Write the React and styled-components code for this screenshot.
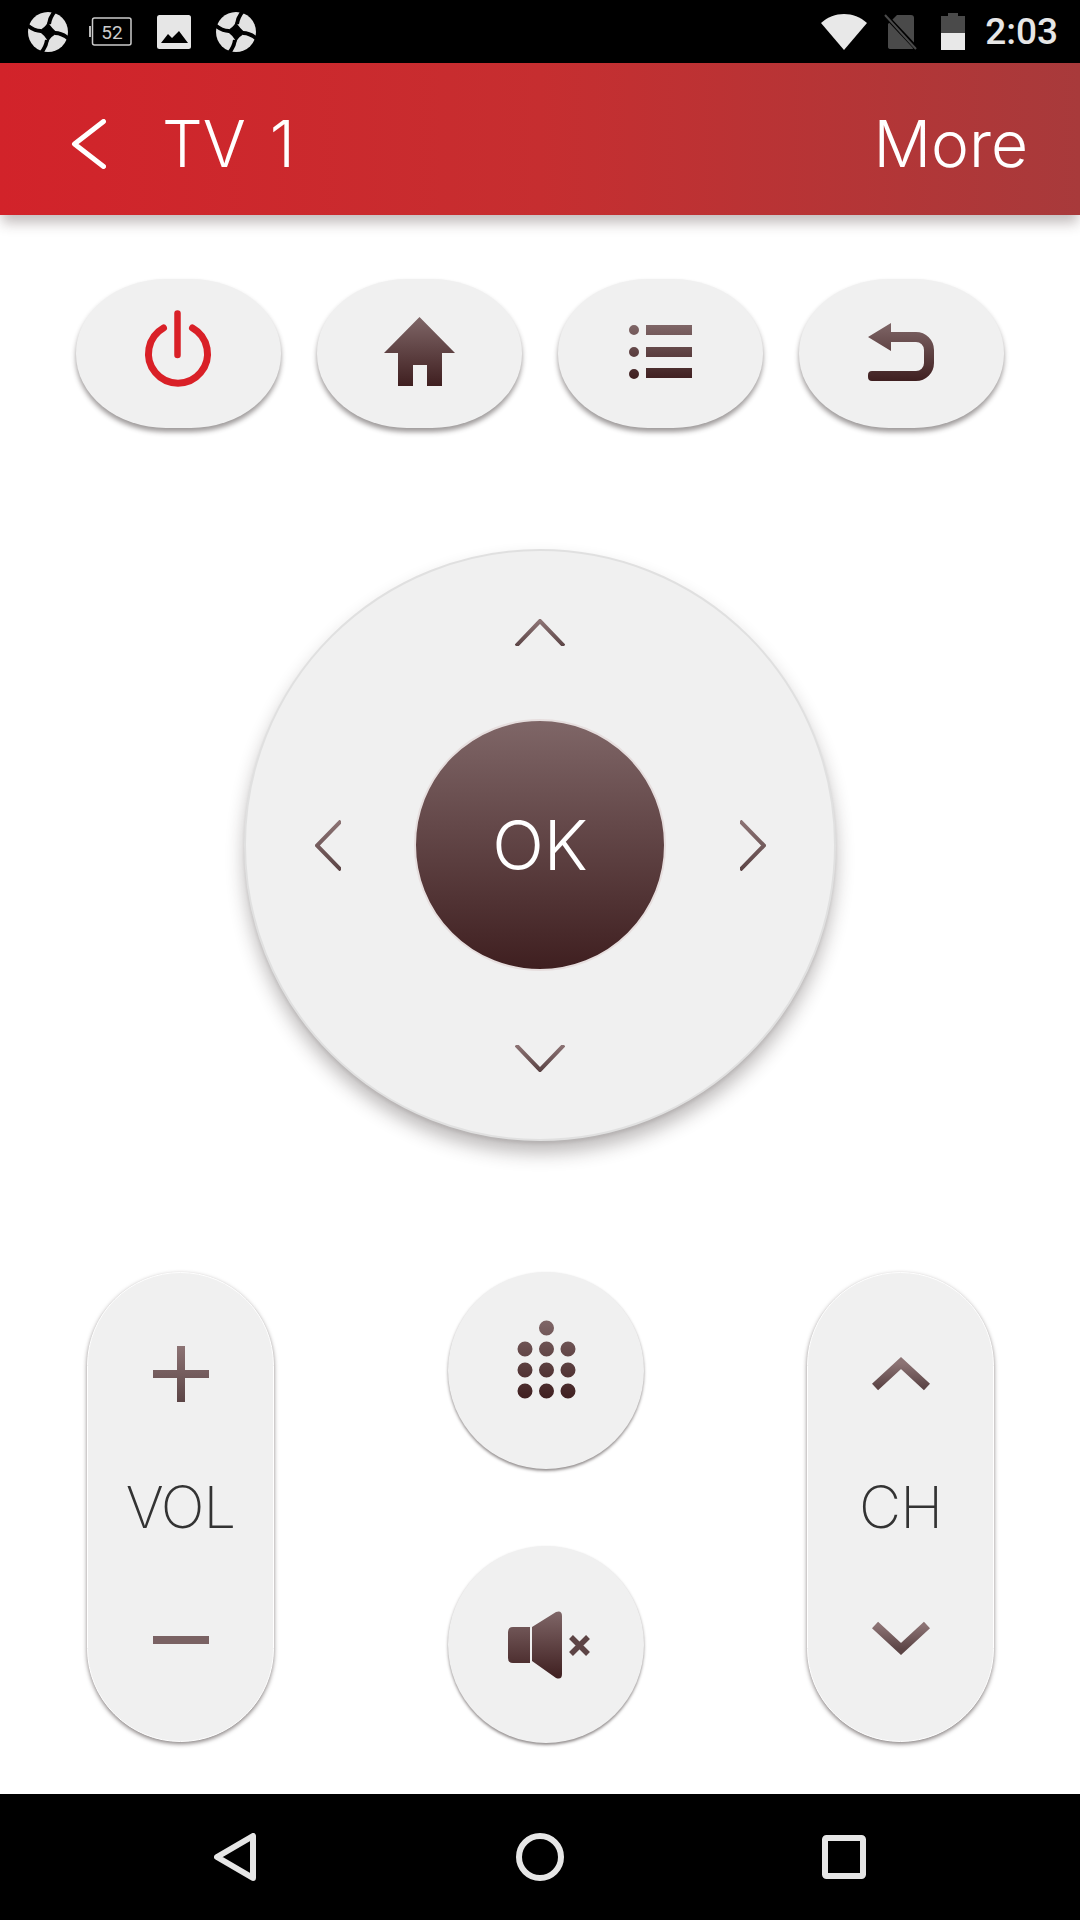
import React from "react"
import styled, { createGlobalStyle } from "styled-components"

const GlobalStyle = createGlobalStyle`
  html, body { margin: 0; padding: 0; background: #fff; }
  * { box-sizing: border-box; }
`

const Screen = styled.div`
  width: 1080px;
  height: 1920px;
  display: flex;
  flex-direction: column;
  overflow: hidden;
  background: #fff;
  font-family: Inter, "Liberation Sans", sans-serif;
`

const StatusBar = styled.div`
  height: 63px;
  background: #000;
  display: flex;
  align-items: center;
  padding: 0 22px 0 28px;
  color: #e6e6e6;
`

const StatusLeft = styled.div`
  display: flex;
  align-items: center;
  gap: 25px;
  flex: 1;
`

const StatusRight = styled.div`
  display: flex;
  align-items: center;
  gap: 20px;
`

const Time = styled.span`
  font-family: Roboto, sans-serif;
  font-weight: 500;
  font-size: 37px;
  line-height: 63px;
`

const AppBar = styled.div`
  height: 152px;
  display: flex;
  align-items: center;
  padding: 0 52px 0 71px;
  color: #fff;
  background: linear-gradient(90deg, #d2232a 0%, #c62e30 50%, #a83a3b 100%);
  box-shadow: 0 10px 12px -2px rgba(60, 40, 40, 0.3);
  position: relative;
`

const BarTitle = styled.span`
  font-weight: 300;
  font-size: 64px;
  line-height: 1;
  margin: 10px 0 0 56px;
  word-spacing: 6px;
  flex: 1;
`

const BarAction = styled.span`
  font-weight: 300;
  font-size: 64px;
  line-height: 1;
  margin-top: 10px;
`

const Main = styled.div`
  flex: 1;
  display: flex;
  flex-direction: column;
`

const ButtonRow = styled.div`
  display: flex;
  gap: 36.5px;
  padding: 64px 0 0 76px;
`

const Soft = styled.button`
  border: 0;
  background: #f0f0f0;
  display: flex;
  align-items: center;
  justify-content: center;
`

const TopButton = styled(Soft)`
  width: 204.5px;
  height: 149px;
  padding: 0 0 ${(p) => p.$lift || 4}px;
  border-radius: 90px / 74px;
  box-shadow: 0 4px 5px rgba(40, 30, 30, 0.45);
`

const DPad = styled.div`
  width: 592px;
  height: 592px;
  margin: 121px auto 0;
  border-radius: 50%;
  background: #f0f0f0;
  border: 2px solid #e0e0e0;
  box-shadow: 0 3px 3px rgba(40, 30, 30, 0.08), 0 12px 18px rgba(40, 30, 30, 0.3);
  display: grid;
  grid-template-columns: 1fr 252px 1fr;
  grid-template-rows: 1fr 252px 1fr;
  place-items: center;
`

const OkButton = styled.button`
  grid-column: 2;
  grid-row: 2;
  width: 252px;
  height: 252px;
  padding: 0;
  border-radius: 50%;
  border: 2px solid #e6dede;
  background: linear-gradient(180deg, #7f6667 0%, #3f1f20 100%);
  color: #fff;
  font-family: inherit;
  font-weight: 300;
  font-size: 68px;
`

const ArrowCell = styled.div`
  grid-column: ${(p) => p.$col};
  grid-row: ${(p) => p.$row};
  display: flex;
  margin: ${(p) => p.$margin};
`

const Lower = styled.div`
  display: flex;
  gap: 163px;
  margin-top: 131px;
  padding-left: 87px;
`

const Pill = styled.div`
  width: 187px;
  height: 470px;
  border-radius: 94px;
  background: #f0f0f0;
  border: 1px solid #fff;
  box-shadow: 0 2px 4px rgba(40, 30, 30, 0.55);
  padding: 73px 0;
  display: flex;
  flex-direction: column;
  align-items: center;
  justify-content: space-between;
`

const PillLabel = styled.span`
  font-weight: 200;
  font-size: 58px;
  letter-spacing: -1px;
  line-height: 1;
  color: #333;
`

const MiddleColumn = styled.div`
  margin-left: 11px;
  display: flex;
  flex-direction: column;
  gap: 77px;
`

const RoundButton = styled(Soft)`
  width: 196px;
  height: 197px;
  padding: ${(p) => p.$pad || 0};
  border-radius: 50%;
  box-shadow: 0 2px 3px rgba(40, 30, 30, 0.5);
`

const NavBar = styled.div`
  margin-top: auto;
  height: 126px;
  background: #000;
  display: flex;
  align-items: center;
  justify-content: space-between;
  padding: 0 214px;
`

const Icon = styled.svg`
  display: block;
  flex: none;
`

const BadgeSvg = styled(Icon)`
  margin-left: -4px;
`

const SimSvg = styled(Icon)`
  margin: 0 3px 0 -3px;
`

const NavHomeSvg = styled(Icon)`
  margin-left: 1px;
`

const BarChevronSvg = styled(Icon)`
  margin-top: 10px;
`

// shared brown fade used on the remote icons
const Fade = ({ id, light }) => (
  <defs>
    <linearGradient id={id} x1="0" y1="0" x2="0" y2="1">
      <stop offset="0" stopColor={light ? "#8c7374" : "#7f6667"} />
      <stop offset="1" stopColor={light ? "#5c4546" : "#3f1f20"} />
    </linearGradient>
  </defs>
)

const SyncIcon = () => (
  <Icon width="40" height="40" viewBox="0 0 40 40">
    <circle cx="20" cy="20" r="20" fill="#e2e2e2" />
    <path d="M20 10Q24 17 30 21Q23 24 20 30Q17 23 10 19Q17 16 20 10Z" fill="#000" />
    <path d="M-1 13Q6 19 13 19M27 -1Q22 5 21 12M41 27Q34 21 27 21M13 41Q18 35 19 28" fill="none" stroke="#000" strokeWidth="4" />
  </Icon>
)

const BatteryBadge = () => (
  <BadgeSvg width="43" height="29" viewBox="0 0 43 29">
    <rect x="0" y="9" width="2" height="11" fill="#bbb" />
    <rect x="3.5" y="1" width="38.5" height="27" rx="2" fill="none" stroke="#ccc" strokeWidth="1.5" />
    <text x="23" y="22" textAnchor="middle" fontFamily="Roboto, sans-serif" fontSize="19" fill="#ccc">52</text>
  </BadgeSvg>
)

const ImageIcon = () => (
  <Icon width="34" height="34" viewBox="0 0 34 34">
    <rect width="34" height="34" rx="2.5" fill="#e6e6e6" />
    <path d="M4 28L11 19L15 23L22 16L31 28Z" fill="#000" />
  </Icon>
)

const WifiIcon = () => (
  <Icon width="46" height="36" viewBox="0 0 46 36">
    <path d="M0 9C13 -3 33 -3 46 9L23 36Z" fill="#e8e8e8" />
  </Icon>
)

const SimIcon = () => (
  <SimSvg width="34" height="36" viewBox="0 0 34 36">
    <path d="M13 1H27Q30 1 30 4V33Q30 35 27 35H7Q4 35 4 33V10Z" fill="#4a4a4a" />
    <path d="M1 1L33 35" stroke="#000" strokeWidth="4.5" />
    <path d="M1 1L32 35" stroke="#4a4a4a" strokeWidth="2" />
  </SimSvg>
)

const BatteryIcon = () => (
  <Icon width="24" height="37" viewBox="0 0 24 37">
    <path d="M7 0H17V3H24V20H0V3H7Z" fill="#4a4a4a" />
    <rect y="20" width="24" height="17" fill="#e8e8e8" />
  </Icon>
)

const BarChevron = () => (
  <BarChevronSvg width="35" height="50" viewBox="0 0 35 50">
    <path d="M32.5 2.5L3.5 25L32.5 47.5" fill="none" stroke="#fff" strokeWidth="5" strokeLinecap="round" strokeLinejoin="round" />
  </BarChevronSvg>
)

const PowerIcon = () => (
  <Icon width="72" height="80" viewBox="0 0 72 80">
    <path d="M21.5 18A29.5 29.5 0 1 0 50.5 18" fill="none" stroke="#d92027" strokeWidth="7" strokeLinecap="round" />
    <path d="M35.5 3.5V45" fill="none" stroke="#d92027" strokeWidth="6.5" strokeLinecap="round" />
  </Icon>
)

const HomeIcon = () => (
  <Icon width="71" height="69" viewBox="0 0 71 69">
    <Fade id="home" />
    <path d="M35.5 0L71 36H58V69H43V48H29V69H14V36H0Z" fill="url(#home)" />
  </Icon>
)

const MenuIcon = () => (
  <Icon width="63" height="54" viewBox="0 0 63 54">
    <Fade id="menu" />
    <path d="M5 0A5 5 0 0 1 5 10A5 5 0 0 1 5 0ZM5 22A5 5 0 0 1 5 32A5 5 0 0 1 5 22ZM5 44A5 5 0 0 1 5 54A5 5 0 0 1 5 44ZM17 0H63V10H17ZM17 22H63V32H17ZM17 43H63V53H17Z" fill="url(#menu)" />
  </Icon>
)

const BackIcon = () => (
  <Icon width="66" height="58" viewBox="0 0 66 58">
    <Fade id="backArrow" />
    <path d="M0 14L23 0V9H48A18 18 0 0 1 66 27V40A18 18 0 0 1 48 58H4A4 4 0 0 1 0 54V52A4 4 0 0 1 4 48H48A8 8 0 0 0 56 40V27A8 8 0 0 0 48 19H23V28Z" fill="url(#backArrow)" />
  </Icon>
)

const DPadChevron = ({ dir }) => {
  const id = `pad-${dir}`
  const shapes = {
    up: { w: 50, h: 27, d: "M1 27L25 2L49 27" },
    down: { w: 50, h: 27, d: "M1 0L25 25L49 0" },
    left: { w: 26, h: 51, d: "M26 1L2 25.5L26 50" },
    right: { w: 26, h: 51, d: "M0 1L24 25.5L0 50" },
  }
  const s = shapes[dir]
  return (
    <Icon width={s.w} height={s.h} viewBox={`0 0 ${s.w} ${s.h}`}>
      <Fade id={id} light />
      <path d={s.d} fill="none" stroke={`url(#${id})`} strokeWidth="4" />
    </Icon>
  )
}

const PlusIcon = () => (
  <Icon width="56" height="56" viewBox="0 0 56 56">
    <Fade id="plus" light />
    <path d="M24 0H32V24H56V32H32V56H24V32H0V24H24Z" fill="url(#plus)" />
  </Icon>
)

const MinusIcon = () => (
  <Icon width="56" height="56" viewBox="0 0 56 56">
    <rect y="24" width="56" height="8" fill="#7a6263" />
  </Icon>
)

const ChannelChevron = ({ down }) => {
  const id = down ? "chDown" : "chUp"
  return (
    <Icon width="58" height="56" viewBox="0 0 58 56">
      <Fade id={id} light />
      <path d={down ? "M3 13L29 37L55 13" : "M3 41L29 17L55 41"} fill="none" stroke={`url(#${id})`} strokeWidth="9" />
    </Icon>
  )
}

const KeypadIcon = () => {
  const dots = [[29.5, 8]]
  for (const y of [29, 50, 71]) {
    for (const x of [8, 29.5, 51]) dots.push([x, y])
  }
  return (
    <Icon width="59" height="79" viewBox="0 0 59 79">
      <Fade id="keypad" />
      <path
        fill="url(#keypad)"
        d={dots.map(([x, y]) => `M${x - 7.5} ${y}a7.5 7.5 0 1 0 15 0a7.5 7.5 0 1 0 -15 0Z`).join("")}
      />
    </Icon>
  )
}

const MuteIcon = () => (
  <Icon width="82" height="68" viewBox="0 0 82 68">
    <Fade id="cone" />
    <path d="M5 16H22V52H5Q0 52 0 47V21Q0 16 5 16ZM24 16L48 1Q54 -1 54 5V63Q54 69 48 67L24 50Z" fill="url(#cone)" />
    <path d="M63 26L80 43M80 26L63 43" stroke="#5d4445" strokeWidth="5.5" />
  </Icon>
)

const NavBack = () => (
  <Icon width="42" height="48" viewBox="0 0 42 48">
    <path d="M39 3V45L3 24Z" fill="none" stroke="#e6e6e6" strokeWidth="6" strokeLinejoin="round" />
  </Icon>
)

const NavHome = () => (
  <NavHomeSvg width="48" height="48" viewBox="0 0 48 48">
    <circle cx="24" cy="24" r="21" fill="none" stroke="#e6e6e6" strokeWidth="6" />
  </NavHomeSvg>
)

const NavRecent = () => (
  <Icon width="44" height="44" viewBox="0 0 44 44">
    <rect x="3" y="3" width="38" height="38" rx="1.5" fill="none" stroke="#e6e6e6" strokeWidth="6" />
  </Icon>
)

export default function App() {
  return (
    <Screen>
      <GlobalStyle />
      <StatusBar>
        <StatusLeft>
          <SyncIcon />
          <BatteryBadge />
          <ImageIcon />
          <SyncIcon />
        </StatusLeft>
        <StatusRight>
          <WifiIcon />
          <SimIcon />
          <BatteryIcon />
          <Time>2:03</Time>
        </StatusRight>
      </StatusBar>
      <AppBar>
        <BarChevron />
        <BarTitle>TV 1</BarTitle>
        <BarAction>More</BarAction>
      </AppBar>
      <Main>
        <ButtonRow>
          <TopButton $lift={8}><PowerIcon /></TopButton>
          <TopButton><HomeIcon /></TopButton>
          <TopButton><MenuIcon /></TopButton>
          <TopButton><BackIcon /></TopButton>
        </ButtonRow>
        <DPad>
          <ArrowCell $col={2} $row={1} $margin="0 0 6px"><DPadChevron dir="up" /></ArrowCell>
          <ArrowCell $col={1} $row={2} $margin="0 5px 0 0"><DPadChevron dir="left" /></ArrowCell>
          <OkButton>OK</OkButton>
          <ArrowCell $col={3} $row={2} $margin="0 0 0 6px"><DPadChevron dir="right" /></ArrowCell>
          <ArrowCell $col={2} $row={3} $margin="6px 0 0"><DPadChevron dir="down" /></ArrowCell>
        </DPad>
        <Lower>
          <Pill>
            <PlusIcon />
            <PillLabel>VOL</PillLabel>
            <MinusIcon />
          </Pill>
          <MiddleColumn>
            <RoundButton $pad="0 0 22px"><KeypadIcon /></RoundButton>
            <RoundButton $pad="0 0 0 6px"><MuteIcon /></RoundButton>
          </MiddleColumn>
          <Pill>
            <ChannelChevron />
            <PillLabel>CH</PillLabel>
            <ChannelChevron down />
          </Pill>
        </Lower>
      </Main>
      <NavBar>
        <NavBack />
        <NavHome />
        <NavRecent />
      </NavBar>
    </Screen>
  )
}
